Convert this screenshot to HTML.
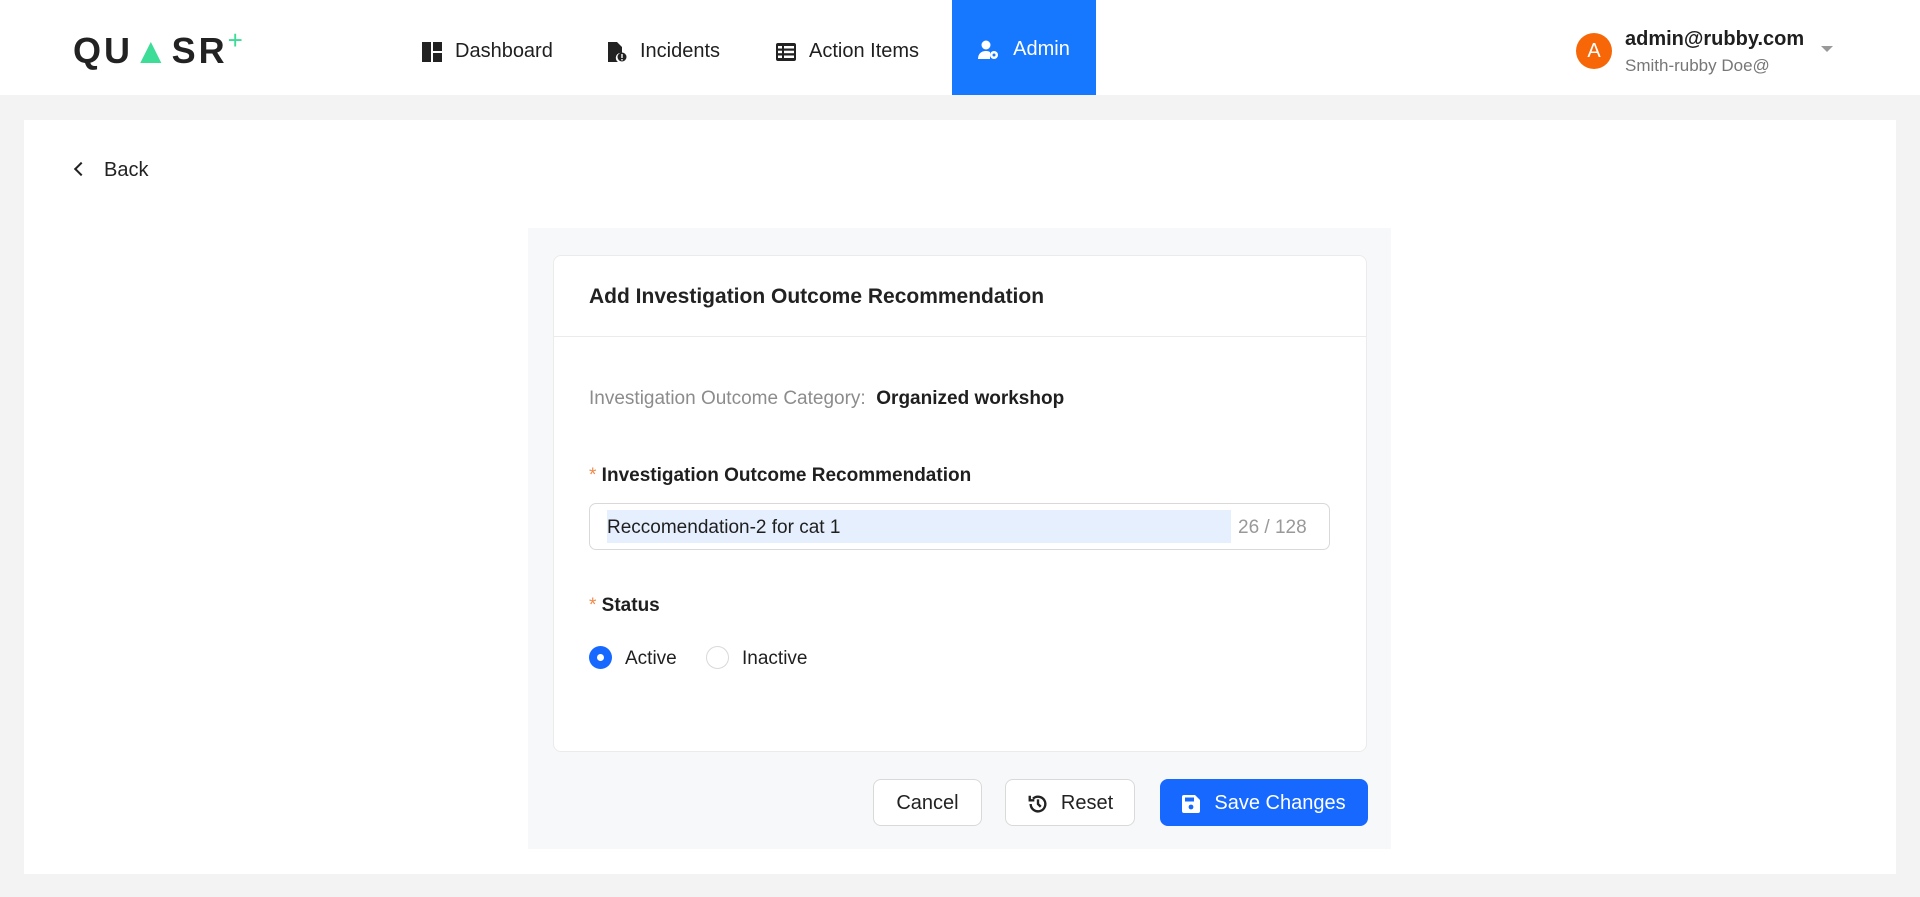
<!DOCTYPE html>
<html><head><meta charset="utf-8"><style>
*{box-sizing:border-box;margin:0;padding:0}
body{width:1920px;height:897px;background:#f3f3f3;font-family:"Liberation Sans",sans-serif;color:#1f1f1f;position:relative;overflow:hidden;font-size:19px}
.hdr{position:absolute;left:0;top:0;width:1920px;height:95px;background:#fff}
.logo{position:absolute;left:73px;top:30px;font-size:36px;font-weight:bold;letter-spacing:3px;color:#222}
.nav{position:absolute;top:4px;height:95px;display:flex;align-items:center;font-size:20px;color:#1f1f1f}
.nav svg{margin-right:13px}
.admin{top:0;background:#1677ff;color:#fff;left:952px;width:144px;justify-content:center;padding-top:4px}
.card{position:absolute;left:24px;top:120px;width:1872px;height:754px;background:#fff}
.abs{position:absolute}
.btn{position:absolute;top:779px;height:47px;border:1px solid #d9d9d9;border-radius:8px;background:#fff;display:flex;align-items:center;justify-content:center;font-size:20px;color:#222;padding-top:2px}
</style></head><body>
<div class="hdr">
 <div class="logo">QU<span style="color:#3ddc97">&#9650;</span>SR<span style="color:#3ddc97;font-size:26px;position:relative;top:-14px;font-weight:normal">+</span></div>
 <div class="nav" style="left:422px"><svg width="20" height="20" viewBox="0 0 20 20"><rect x="0" y="0" width="9" height="20" fill="#222"/><rect x="11" y="0" width="9" height="9" fill="#222"/><rect x="11" y="11" width="9" height="9" fill="#222"/></svg>Dashboard</div>
 <div class="nav" style="left:607px"><svg width="20" height="20" viewBox="0 0 20 20"><path d="M1 0h9l5 5v6a5 5 0 0 0-4 9H1z" fill="#222"/><circle cx="15" cy="15" r="4.5" fill="#222"/><rect x="14.3" y="12" width="1.4" height="4" fill="#fff"/><rect x="14.3" y="17" width="1.4" height="1.4" fill="#fff"/></svg>Incidents</div>
 <div class="nav" style="left:776px"><svg width="20" height="18" viewBox="0 0 20 18"><rect x="0" y="0" width="20" height="18" rx="2" fill="#222"/><rect x="2" y="3" width="4" height="2.5" fill="#fff"/><rect x="8" y="3" width="10" height="2.5" fill="#fff"/><rect x="2" y="7.7" width="4" height="2.5" fill="#fff"/><rect x="8" y="7.7" width="10" height="2.5" fill="#fff"/><rect x="2" y="12.5" width="4" height="2.5" fill="#fff"/><rect x="8" y="12.5" width="10" height="2.5" fill="#fff"/></svg>Action Items</div>
 <div class="nav admin"><svg width="22" height="20" viewBox="0 0 22 20"><circle cx="8" cy="5" r="4.5" fill="#fff"/><path d="M0 19c0-5 3-8 8-8 2 0 3 .4 4 1v7z" fill="#fff"/><circle cx="16" cy="15" r="4" fill="#fff"/><circle cx="16" cy="15" r="1.5" fill="#1677ff"/></svg>Admin</div>
 <div class="abs" style="left:1576px;top:33px;width:36px;height:36px;border-radius:50%;background:#f76707;color:#fff;font-size:20px;display:flex;align-items:center;justify-content:center">A</div>
 <div class="abs" style="left:1625px;top:28px;font-size:20px;font-weight:bold;color:#1f1f1f">admin@rubby.com</div>
 <div class="abs" style="left:1625px;top:56px;font-size:17px;color:#777">Smith-rubby Doe@</div>
 <div class="abs" style="left:1821px;top:46px;width:0;height:0;border-left:6px solid transparent;border-right:6px solid transparent;border-top:6px solid #999"></div>
</div>
<div class="card"></div>
<div class="abs" style="left:76px;top:159px;font-size:20px;color:#222"><span style="display:inline-block;width:10px;height:10px;border-left:2px solid #222;border-bottom:2px solid #222;transform:rotate(45deg);margin-right:18px;position:relative;top:-2px"></span>Back</div>
<div class="abs" style="left:528px;top:228px;width:863px;height:621px;background:#f7f8fa"></div>
<div class="abs" style="left:553px;top:255px;width:814px;height:497px;background:#fff;border:1px solid #ebebeb;border-radius:8px"></div>
<div class="abs" style="left:553px;top:336px;width:814px;height:1px;background:#ebebeb"></div>
<div class="abs" style="left:589px;top:285px;font-size:21px;font-weight:bold;color:#222">Add Investigation Outcome Recommendation</div>
<div class="abs" style="left:589px;top:388px;font-size:19px;color:#8c8c8c">Investigation Outcome Category:&nbsp; <span style="color:#1f1f1f;font-weight:bold">Organized workshop</span></div>
<div class="abs" style="left:589px;top:465px;font-size:19px;font-weight:bold;color:#1f1f1f"><span style="color:#f08a4b;font-weight:normal">*</span> Investigation Outcome Recommendation</div>
<div class="abs" style="left:589px;top:503px;width:741px;height:47px;border:1px solid #d9d9d9;border-radius:7px"></div>
<div class="abs" style="left:607px;top:510px;width:624px;height:33px;background:#e6effd"></div>
<div class="abs" style="left:607px;top:517px;font-size:19px;color:#1f1f1f">Reccomendation-2 for cat 1</div>
<div class="abs" style="left:1238px;top:517px;font-size:19px;color:#999">26 / 128</div>
<div class="abs" style="left:589px;top:595px;font-size:19px;font-weight:bold;color:#1f1f1f"><span style="color:#f08a4b;font-weight:normal">*</span> Status</div>
<div class="abs" style="left:589px;top:646px;width:23px;height:23px;border-radius:50%;background:#1668ff"><div style="position:absolute;left:8px;top:8px;width:7px;height:7px;border-radius:50%;background:#fff"></div></div>
<div class="abs" style="left:625px;top:648px;font-size:19px">Active</div>
<div class="abs" style="left:706px;top:646px;width:23px;height:23px;border-radius:50%;border:1px solid #d9d9d9"></div>
<div class="abs" style="left:742px;top:648px;font-size:19px">Inactive</div>
<div class="btn" style="left:873px;width:109px">Cancel</div>
<div class="btn" style="left:1005px;width:130px"><svg width="22" height="22" viewBox="0 0 24 24" style="margin-right:12px" fill="none" stroke="#222" stroke-width="2.6"><path d="M4 12a8 8 0 1 0 2.5-5.8"/><path d="M3 3v5h5" fill="none"/><path d="M12 7v5l3 3"/></svg>Reset</div>
<div class="btn" style="left:1160px;width:208px;background:#1668ff;border-color:#1668ff;color:#fff"><svg width="18" height="18" viewBox="0 0 18 18" style="margin-right:14px"><path d="M0 2a2 2 0 0 1 2-2h11l5 5v11a2 2 0 0 1-2 2H2a2 2 0 0 1-2-2z" fill="#fff"/><rect x="3" y="2.5" width="9" height="4" fill="#1668ff"/><circle cx="9" cy="12" r="2.4" fill="#1668ff"/></svg>Save Changes</div>
</body></html>
